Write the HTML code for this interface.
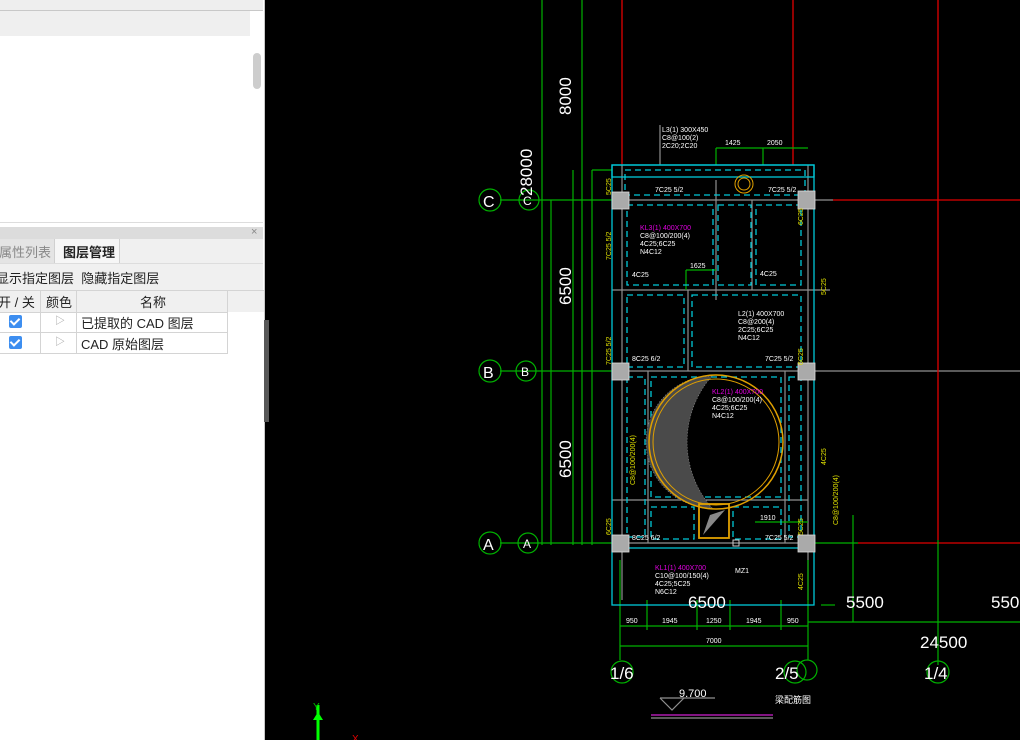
<!DOCTYPE html>
<html><head><meta charset="utf-8"><style>
html,body{margin:0;padding:0;width:1020px;height:740px;overflow:hidden;background:#000;font-family:"Liberation Sans","Noto Sans CJK SC",sans-serif;}
#lp{position:absolute;left:0;top:0;width:264px;height:740px;background:#fff;border-right:1px solid #c8c8c8;}
.abs{position:absolute;}
.cb{position:absolute;width:13px;height:13px;background:#3d8ef0;border-radius:2px;}
.cb:after{content:"";position:absolute;left:3px;top:1px;width:4px;height:7px;border:solid #fff;border-width:0 2px 2px 0;transform:rotate(45deg);}
.t{font-size:13px;color:#222;}
</style></head><body>
<div id="lp">
 <div class="abs" style="left:0;top:0;width:263px;height:10px;background:#eeeeee;border-bottom:1px solid #c8c8c8"></div>
 <div class="abs" style="left:0;top:11px;width:250px;height:25px;background:#efefef"></div>
 <div class="abs" style="left:253px;top:53px;width:8px;height:36px;background:#cdcdcd;border-radius:4px"></div>
 <div class="abs" style="left:0;top:222px;width:263px;height:5px;background:#fff;border-top:1px solid #ddd"></div>
 <div class="abs" style="left:0;top:227px;width:263px;height:12px;background:#dcdcdc"></div>
 <div class="abs" style="left:251px;top:226px;font-size:11px;color:#888">×</div>
 <div class="abs" style="left:0;top:239px;width:263px;height:24px;background:#f0f0f0;border-bottom:1px solid #ddd"></div>
 <div class="abs" style="left:0;top:239px;width:54px;height:24px;background:#e4e4e4;border-right:1px solid #d0d0d0"></div>
 <div class="abs t" style="left:-1px;top:242px;color:#888">属性列表</div>
 <div class="abs" style="left:55px;top:239px;width:64px;height:24px;background:#f6f6f6;border-right:1px solid #d0d0d0"></div>
 <div class="abs t" style="left:63px;top:242px;font-weight:bold">图层管理</div>
 <div class="abs" style="left:0;top:264px;width:263px;height:26px;background:#f0f0f0"></div>
 <div class="abs t" style="left:-4px;top:268px">显示指定图层&nbsp; 隐藏指定图层</div>
 <div class="abs" style="left:0;top:290px;width:227px;height:21px;background:#f0f0f0;border-top:1px solid #d4d4d4;border-bottom:1px solid #d4d4d4"></div>
 <div class="abs" style="left:227px;top:290px;width:37px;height:21px;background:#f0f0f0;border-top:1px solid #d4d4d4"></div>
 <div class="abs" style="left:40px;top:290px;width:1px;height:63px;background:#d4d4d4"></div>
 <div class="abs" style="left:76px;top:290px;width:1px;height:63px;background:#d4d4d4"></div>
 <div class="abs" style="left:227px;top:290px;width:1px;height:63px;background:#d4d4d4"></div>
 <div class="abs" style="left:0;top:332px;width:227px;height:1px;background:#d4d4d4"></div>
 <div class="abs" style="left:0;top:353px;width:228px;height:1px;background:#d4d4d4"></div>
 <div class="abs t" style="left:-2px;top:292px">开 / 关</div>
 <div class="abs t" style="left:46px;top:292px">颜色</div>
 <div class="abs t" style="left:140px;top:292px">名称</div>
 <div class="cb" style="left:9px;top:315px"></div>
 <div class="cb" style="left:9px;top:336px"></div>
 <div class="abs" style="left:55px;top:312px;font-size:10px;color:#999">▷</div>
 <div class="abs" style="left:55px;top:333px;font-size:10px;color:#999">▷</div>
 <div class="abs t" style="left:81px;top:313px">已提取的 CAD 图层</div>
 <div class="abs t" style="left:81px;top:334px">CAD 原始图层</div>
</div>
<div class="abs" style="left:265px;top:0;width:4px;height:740px;background:#000"></div>
<div class="abs" style="left:264px;top:320px;width:5px;height:102px;background:#585858"></div>
<svg class="abs" style="left:0;top:0" width="1020" height="740" xmlns="http://www.w3.org/2000/svg" font-family="Liberation Sans, sans-serif">
<g stroke="#909090" stroke-width="1.2" fill="none">
<line x1="612" y1="200" x2="833" y2="200"/>
<line x1="612" y1="371" x2="1020" y2="371"/><line x1="612" y1="543" x2="808" y2="543"/>
<line x1="612" y1="290" x2="830" y2="290"/><line x1="612" y1="500" x2="808" y2="500"/>
<line x1="622" y1="165" x2="622" y2="600"/><line x1="808" y1="165" x2="808" y2="600"/>
<line x1="716" y1="180" x2="716" y2="300"/><line x1="752" y1="200" x2="752" y2="290"/><line x1="688" y1="290" x2="688" y2="371"/>
<line x1="648" y1="371" x2="648" y2="543"/><line x1="785" y1="371" x2="785" y2="543"/>
<line x1="660" y1="125" x2="660" y2="165"/>
<line x1="651" y1="718" x2="773" y2="718"/><line x1="660" y1="698" x2="715" y2="698"/>
<polyline points="660,698 672,710 684,698"/>
</g>
<g stroke="#e00000" stroke-width="1.3">
<line x1="622" y1="0" x2="622" y2="165"/><line x1="793" y1="0" x2="793" y2="165"/><line x1="938" y1="0" x2="938" y2="540"/>
<line x1="833" y1="200" x2="1020" y2="200"/><line x1="858" y1="543" x2="1020" y2="543"/>
</g>
<g stroke="#00b000" stroke-width="1.2" fill="none">
<line x1="542" y1="0" x2="542" y2="545"/><line x1="582" y1="0" x2="582" y2="545"/>
<line x1="551" y1="200" x2="551" y2="545"/><line x1="573" y1="170" x2="573" y2="545"/><line x1="592" y1="170" x2="592" y2="545"/>
<line x1="500" y1="200" x2="612" y2="200"/><line x1="500" y1="371" x2="612" y2="371"/><line x1="500" y1="543" x2="612" y2="543"/>
<line x1="592" y1="170" x2="612" y2="170"/>
<line x1="620" y1="626" x2="808" y2="626"/><line x1="620" y1="646" x2="808" y2="646"/>
<line x1="620" y1="560" x2="620" y2="660"/><line x1="808" y1="560" x2="808" y2="660"/>
<line x1="647" y1="600" x2="647" y2="630"/><line x1="697" y1="600" x2="697" y2="630"/><line x1="730" y1="600" x2="730" y2="630"/><line x1="781" y1="600" x2="781" y2="630"/>
<line x1="808" y1="622" x2="1020" y2="622"/><line x1="938" y1="540" x2="938" y2="665"/><line x1="853" y1="515" x2="853" y2="622"/>
<line x1="808" y1="543" x2="858" y2="543"/><line x1="821" y1="605" x2="835" y2="605"/>
<line x1="716" y1="148" x2="808" y2="148"/><line x1="716" y1="148" x2="716" y2="165"/><line x1="763" y1="148" x2="763" y2="165"/>
<line x1="686" y1="270" x2="716" y2="270"/><line x1="686" y1="270" x2="686" y2="290"/>
<line x1="755" y1="522" x2="808" y2="522"/>
<circle cx="490" cy="200" r="11"/><circle cx="529" cy="200" r="10"/>
<circle cx="490" cy="371" r="11"/><circle cx="526" cy="371" r="10"/>
<circle cx="490" cy="543" r="11"/><circle cx="528" cy="543" r="10"/>
<circle cx="622" cy="672" r="11"/><circle cx="795" cy="672" r="11"/><circle cx="807" cy="670" r="10"/><circle cx="938" cy="672" r="11"/>
<line x1="318" y1="705" x2="318" y2="740" stroke="#00ff00" stroke-width="3"/>
</g>
<polygon points="313,720 318,712 323,720" fill="#00ff00"/>
<text x="313" y="710" fill="#00c000" font-size="10">Y</text>
<text x="352" y="742" fill="#d00" font-size="10">X</text>
<line x1="651" y1="715" x2="773" y2="715" stroke="#d020d0" stroke-width="1.2"/>
<g stroke="#00c8d8" stroke-width="1.3" fill="none">
<rect x="612" y="165" width="202" height="440"/>
<rect x="612" y="165" width="202" height="12"/>
<line x1="612" y1="548" x2="814" y2="548"/>
</g>
<g stroke="#00c8d8" stroke-width="1.3" fill="none" stroke-dasharray="6,4">
<rect x="627" y="205" width="86" height="80"/><rect x="718" y="205" width="33" height="80"/><rect x="756" y="205" width="45" height="80"/>
<rect x="627" y="295" width="57" height="72"/><rect x="692" y="295" width="109" height="72"/>
<rect x="627" y="377" width="18" height="160"/><rect x="651" y="377" width="130" height="120"/><rect x="789" y="377" width="12" height="160"/>
<rect x="651" y="507" width="43" height="32"/><rect x="733" y="507" width="48" height="32"/>
<rect x="625" y="170" width="180" height="25"/>
</g>
<path d="M712,376 A66 66 0 0 0 712,508 A100 100 0 0 1 712,376 Z" fill="#4a4a4a" stroke="#999" stroke-width="0.6" stroke-dasharray="1,2"/>
<g stroke="#e0a000" fill="none">
<circle cx="716" cy="442" r="67" stroke-width="1.5"/><circle cx="716" cy="442" r="63" stroke-width="1"/>
<rect x="699" y="504" width="30" height="34" stroke-width="1.8"/>
<circle cx="744" cy="184" r="9"/><circle cx="744" cy="184" r="6"/>
</g>
<polygon points="703,535 710,515 725,510" fill="#888"/>
<g fill="#aaaaaa" stroke="#ddd" stroke-width="0.8">
<rect x="612" y="192" width="17" height="17"/><rect x="798" y="191" width="17" height="18"/>
<rect x="612" y="363" width="17" height="17"/><rect x="798" y="363" width="17" height="17"/>
<rect x="612" y="535" width="17" height="17"/><rect x="798" y="535" width="17" height="17"/>
</g>
<rect x="733" y="540" width="6" height="6" fill="none" stroke="#ccc"/>
<g fill="#ffffff" font-size="17">
<text x="0" y="0" transform="translate(571,115) rotate(-90)">8000</text>
<text x="0" y="0" transform="translate(532,196) rotate(-90)">28000</text>
<text x="0" y="0" transform="translate(571,305) rotate(-90)">6500</text>
<text x="0" y="0" transform="translate(571,478) rotate(-90)">6500</text>
<text x="688" y="608">6500</text><text x="846" y="608">5500</text><text x="991" y="608">550</text>
<text x="920" y="648">24500</text>
<text x="610" y="679">1/6</text><text x="775" y="679">2/5</text><text x="924" y="679">1/4</text>
<text x="483" y="207" font-size="16">C</text><text x="483" y="378" font-size="16">B</text><text x="483" y="550" font-size="16">A</text>
<text x="523" y="205" font-size="12">C</text><text x="521" y="376" font-size="12">B</text><text x="523" y="548" font-size="12">A</text>
<text x="679" y="697" font-size="11">9.700</text>
</g>
<g fill="#ffffff" font-size="7">
<text x="662" y="132">L3(1) 300X450</text><text x="662" y="140">C8@100(2)</text><text x="662" y="148">2C20;2C20</text>
<text x="725" y="145">1425</text><text x="767" y="145">2050</text>
<text x="640" y="238">C8@100/200(4)</text><text x="640" y="246">4C25;6C25</text><text x="640" y="254">N4C12</text>
<text x="690" y="268">1625</text><text x="738" y="316">L2(1) 400X700</text><text x="738" y="324">C8@200(4)</text><text x="738" y="332">2C25;6C25</text><text x="738" y="340">N4C12</text>
<text x="712" y="402">C8@100/200(4)</text><text x="712" y="410">4C25;6C25</text><text x="712" y="418">N4C12</text>
<text x="632" y="361">8C25 6/2</text><text x="765" y="361">7C25 5/2</text><text x="768" y="192">7C25 5/2</text><text x="655" y="192">7C25 5/2</text>
<text x="632" y="540">8C25 6/2</text><text x="765" y="540">7C25 5/2</text><text x="760" y="520">1910</text>
<text x="655" y="578">C10@100/150(4)</text><text x="655" y="586">4C25;5C25</text><text x="655" y="594">N6C12</text>
<text x="626" y="623">950</text><text x="662" y="623">1945</text><text x="706" y="623">1250</text><text x="746" y="623">1945</text><text x="787" y="623">950</text>
<text x="706" y="643">7000</text><text x="735" y="573">MZ1</text><text x="760" y="276">4C25</text><text x="632" y="277">4C25</text>
<text x="775" y="703" font-size="9">梁配筋图</text>
</g>
<g fill="#e000e0" font-size="7">
<text x="640" y="230">KL3(1) 400X700</text><text x="712" y="394">KL2(1) 400X700</text><text x="655" y="570">KL1(1) 400X700</text>
</g>
<g fill="#e0e000" font-size="7">
<text x="0" y="0" transform="translate(611,195) rotate(-90)">5C25</text>
<text x="0" y="0" transform="translate(611,260) rotate(-90)">7C25 5/2</text>
<text x="0" y="0" transform="translate(611,365) rotate(-90)">7C25 5/2</text>
<text x="0" y="0" transform="translate(803,225) rotate(-90)">6C25</text>
<text x="0" y="0" transform="translate(803,365) rotate(-90)">6C25</text>
<text x="0" y="0" transform="translate(826,295) rotate(-90)">5C25</text>
<text x="0" y="0" transform="translate(826,465) rotate(-90)">4C25</text>
<text x="0" y="0" transform="translate(611,535) rotate(-90)">6C25</text>
<text x="0" y="0" transform="translate(803,535) rotate(-90)">5C25</text>
<text x="0" y="0" transform="translate(803,590) rotate(-90)">4C25</text>
<text x="0" y="0" transform="translate(838,525) rotate(-90)">C8@100/200(4)</text>
<text x="0" y="0" transform="translate(635,485) rotate(-90)">C8@100/200(4)</text>
</g>
</svg>
</body></html>
